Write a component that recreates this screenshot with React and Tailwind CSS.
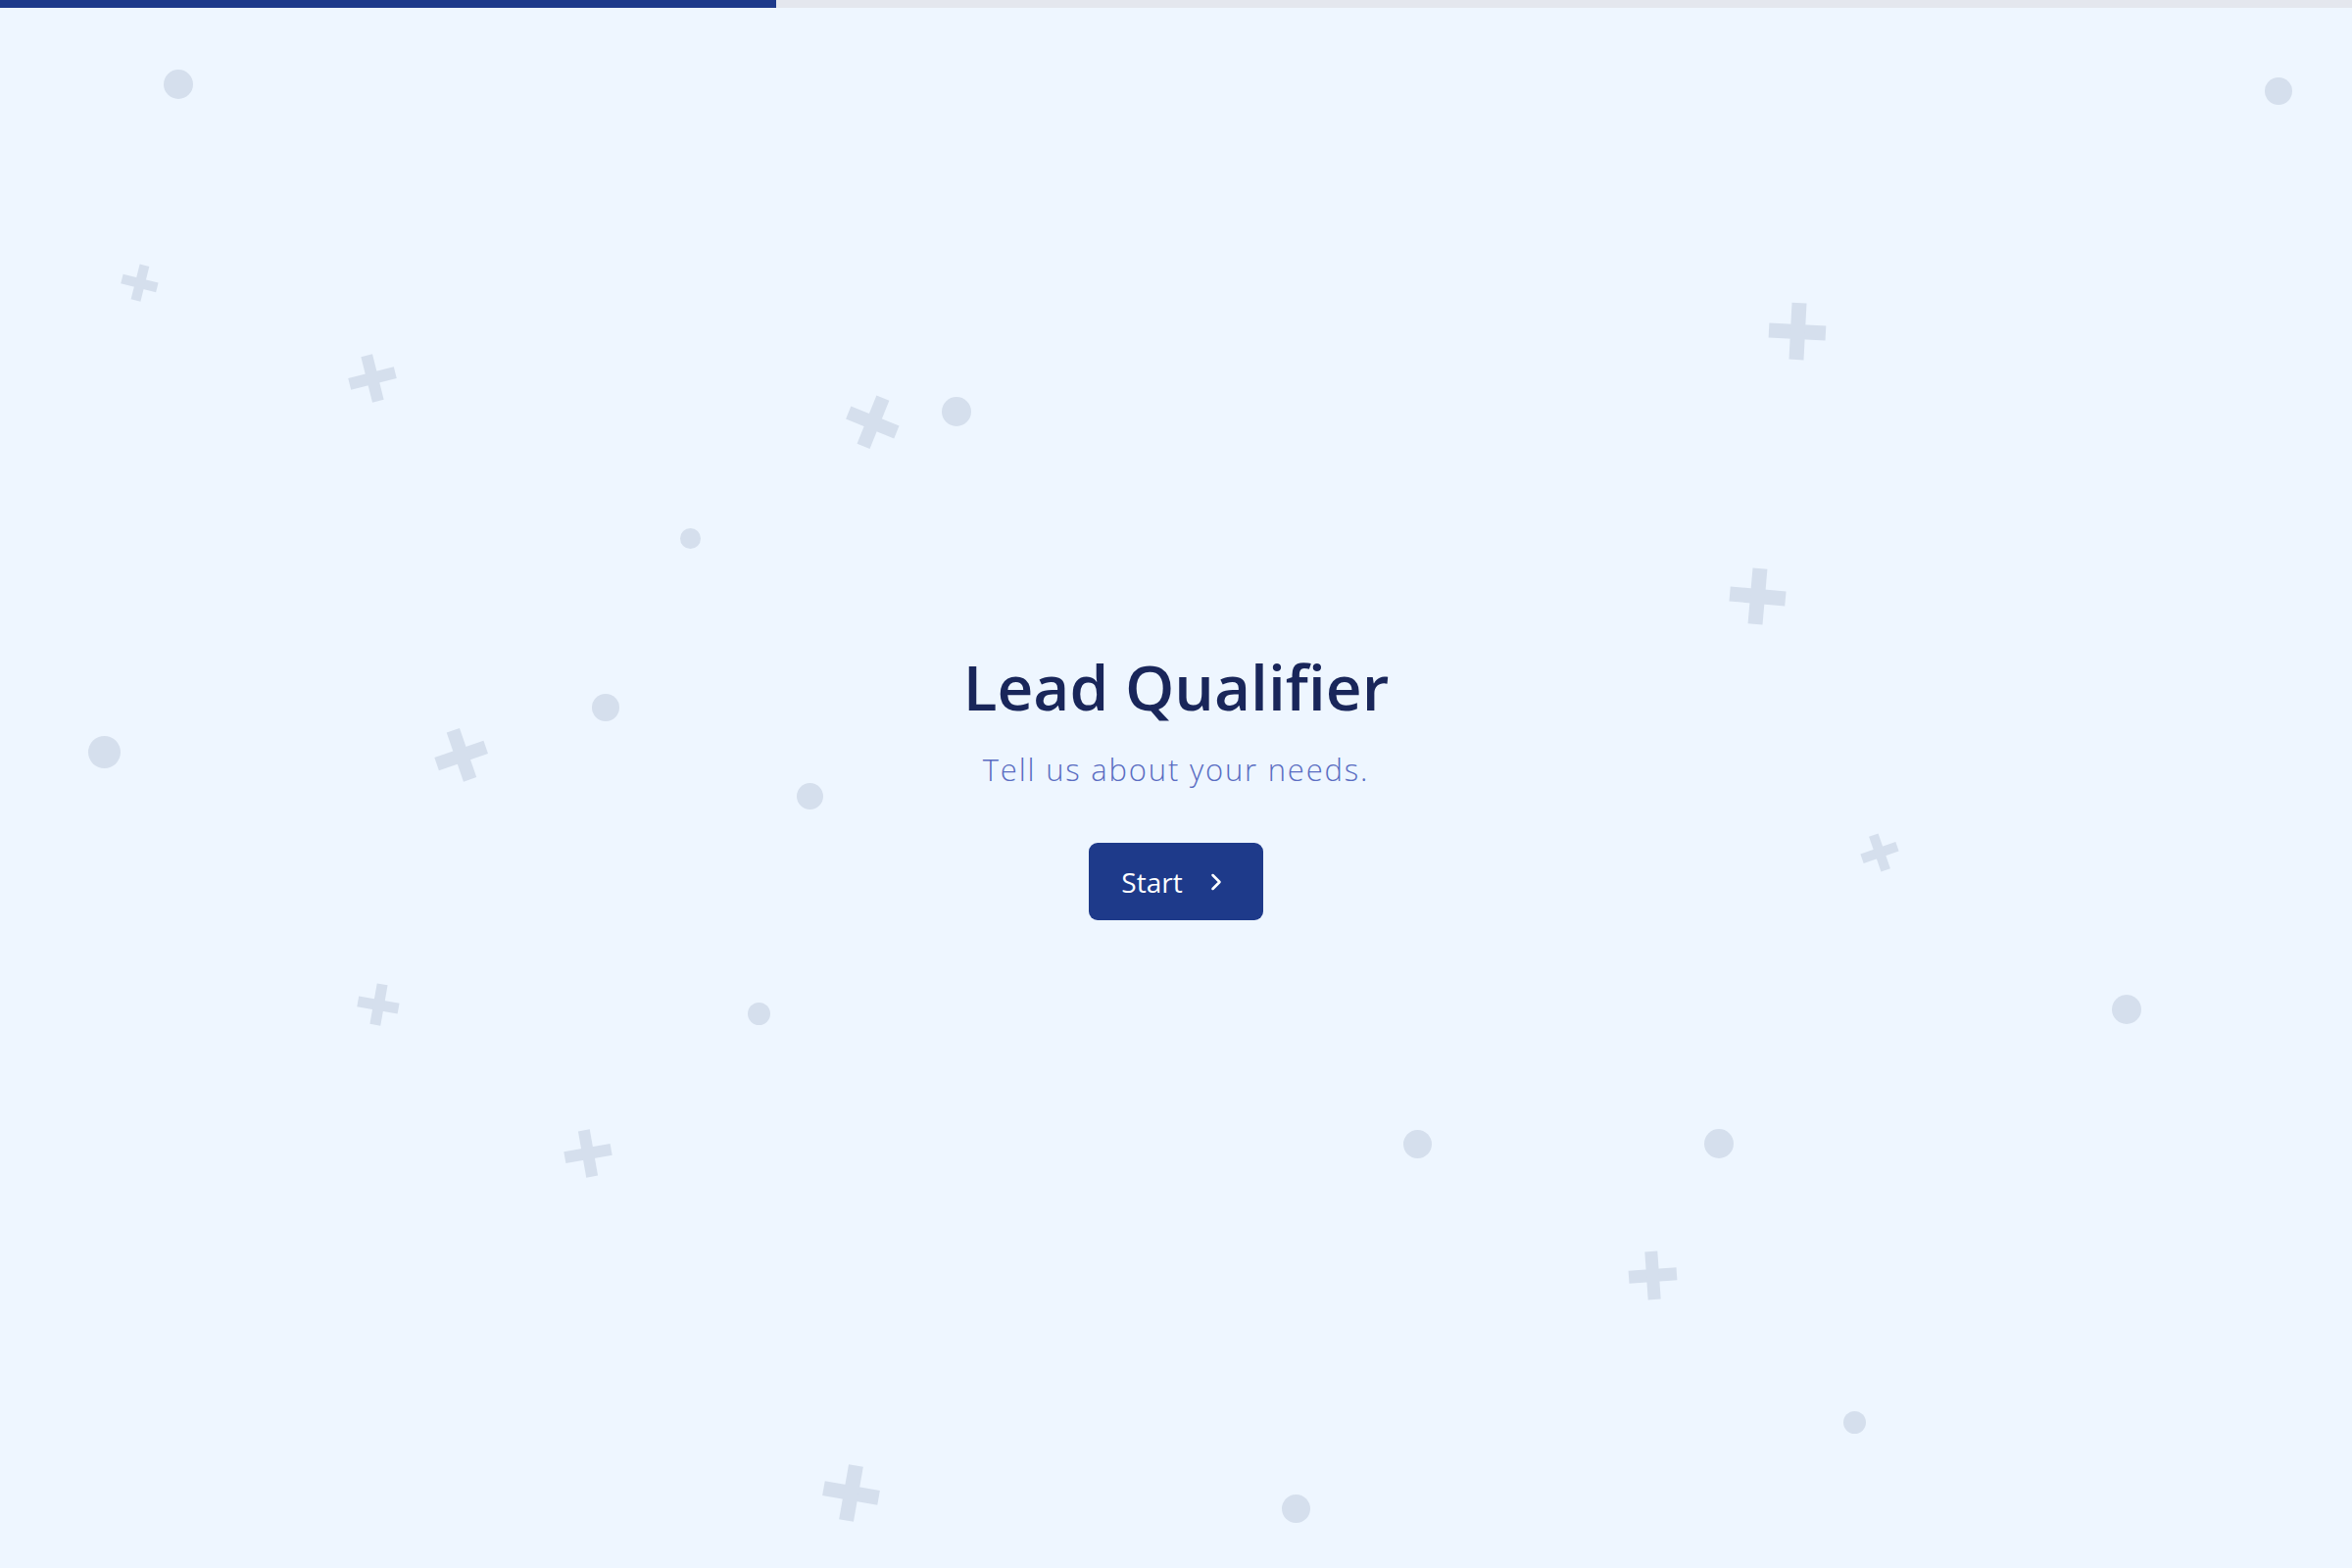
import React from "react";
import { ChevronRight } from "lucide-react";

// Background confetti: dots and tilted crosses scattered over the canvas.
const DOTS = [
  [182, 86, 30],
  [2325, 93, 28],
  [976, 420, 30],
  [704, 549, 21],
  [618, 722, 28],
  [106, 767, 33],
  [826, 812, 27],
  [774, 1034, 23],
  [2170, 1030, 30],
  [1446, 1167, 29],
  [1754, 1167, 30],
  [1892, 1451, 23],
  [1322, 1539, 29],
];

const CROSSES = [
  [142, 288, 37, 14],
  [380, 386, 48, -14],
  [890, 430, 53, 22],
  [1834, 338, 58, 3],
  [1793, 608, 57, 5],
  [470, 770, 53, -19],
  [1918, 870, 38, -19],
  [386, 1025, 42, 10],
  [600, 1177, 48, -10],
  [1686, 1301, 49, -4],
  [868, 1523, 57, 10],
];

function Dot({ x, y, d }) {
  return (
    <div
      className="absolute rounded-full bg-[#d5dfed]"
      style={{ left: x - d / 2, top: y - d / 2, width: d, height: d }}
    />
  );
}

function Cross({ x, y, s, r }) {
  const t = Math.round(s * 0.26);
  return (
    <div
      className="absolute"
      style={{
        left: x - s / 2,
        top: y - s / 2,
        width: s,
        height: s,
        transform: `rotate(${r}deg)`,
      }}
    >
      <div
        className="absolute left-0 bg-[#d5dfed]"
        style={{ top: (s - t) / 2, width: s, height: t }}
      />
      <div
        className="absolute top-0 bg-[#d5dfed]"
        style={{ left: (s - t) / 2, width: t, height: s }}
      />
    </div>
  );
}

export default function App() {
  return (
    <div
      className="relative flex h-screen w-full flex-col overflow-hidden bg-[#eef6ff]"
      style={{ fontFamily: '"Open Sans", "Noto Sans", sans-serif' }}
    >
      <div className="pointer-events-none absolute inset-0">
        {DOTS.map(([x, y, d], i) => (
          <Dot key={`d${i}`} x={x} y={y} d={d} />
        ))}
        {CROSSES.map(([x, y, s, r], i) => (
          <Cross key={`c${i}`} x={x} y={y} s={s} r={r} />
        ))}
      </div>

      {/* progress */}
      <div className="relative h-2 w-full bg-[#e4e7ee]">
        <div className="h-full w-[33%] bg-[#1e3a8a]" />
      </div>

      <main className="relative flex flex-1 flex-col items-center justify-center">
        <h1 className="text-[64px] font-semibold leading-[64px] tracking-[0px] text-[#19265a]">
          Lead Qualifier
        </h1>
        <p className="mt-[37px] text-[31px] font-light leading-[31px] tracking-[1.8px] text-[#5a6dc2]">
          Tell us about your needs.
        </p>
        <button className="mt-[59px] flex h-[79px] items-center gap-[20px] rounded-[9px] bg-[#1e3a8a] pl-[33px] pr-[34px] text-[28px] leading-[28px] text-white">
          <span>Start</span>
          <ChevronRight size={28} strokeWidth={2.2} />
        </button>
      </main>
    </div>
  );
}
